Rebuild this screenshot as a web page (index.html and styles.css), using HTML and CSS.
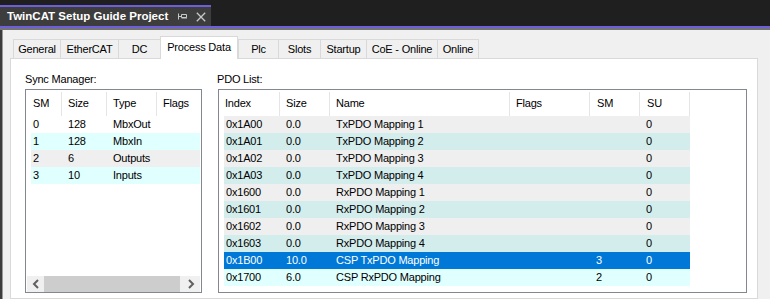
FILE: index.html
```html
<!DOCTYPE html>
<html>
<head>
<meta charset="utf-8">
<link rel="stylesheet" href="styles.css">
</head>
<body>
<div class="top">
  <div class="doctab">
    <span class="doctitle">TwinCAT Setup Guide Project</span>
    <svg class="pin" width="10" height="8" viewBox="0 0 10 8"><path d="M0.5 0.5v6M0.5 3.5h3M3.5 1.5h5v3h-5zM3.5 5h5.5" fill="none" stroke="#c8c8c8" stroke-width="1"/></svg>
    <svg class="close" width="10" height="10" viewBox="0 0 10 10"><path d="M0.8 0.8L9.2 9.2M9.2 0.8L0.8 9.2" stroke="#c8c8c8" stroke-width="1.3"/></svg>
  </div>
</div>
<div class="accent"></div>
<div class="rule"></div>
<div class="main">
  <div class="edge"></div>
  <div class="content">
    <div class="tabs">
      <div class="tab w-general">General</div>
      <div class="tab w-ethercat">EtherCAT</div>
      <div class="tab w-dc">DC</div>
      <div class="tab sel w-pd">Process Data</div>
      <div class="tab w-plc">Plc</div>
      <div class="tab w-slots">Slots</div>
      <div class="tab w-startup">Startup</div>
      <div class="tab w-coe">CoE - Online</div>
      <div class="tab last w-online">Online</div>
    </div>
    <div class="panel">
      <div class="group sync">
        <div class="label">Sync Manager:</div>
        <div class="listbox">
          <div class="hdr">
            <div class="hc s1">SM</div>
            <div class="hc s2">Size</div>
            <div class="hc s3">Type</div>
            <div class="hc s4 nosep">Flags</div>
          </div>
          <div class="row srow white"><div class="c s1">0</div><div class="c s2">128</div><div class="c s3">MbxOut</div><div class="c s4"></div></div>
          <div class="row srow cyan"><div class="c s1">1</div><div class="c s2">128</div><div class="c s3">MbxIn</div><div class="c s4"></div></div>
          <div class="row srow gray"><div class="c s1">2</div><div class="c s2">6</div><div class="c s3">Outputs</div><div class="c s4"></div></div>
          <div class="row srow cyan"><div class="c s1">3</div><div class="c s2">10</div><div class="c s3">Inputs</div><div class="c s4"></div></div>
          <div class="spacer"></div>
          <div class="hscroll">
            <div class="arrow"><svg width="8" height="10" viewBox="0 0 8 10"><path d="M6 1L2 5L6 9" fill="none" stroke="#606060" stroke-width="2"/></svg></div>
            <div class="track"><div class="thumb"></div></div>
            <div class="arrow right"><svg width="8" height="10" viewBox="0 0 8 10"><path d="M2 1L6 5L2 9" fill="none" stroke="#606060" stroke-width="2"/></svg></div>
          </div>
        </div>
      </div>
      <div class="group pdo">
        <div class="label">PDO List:</div>
        <div class="listbox">
          <div class="hdr">
            <div class="hc p1">Index</div>
            <div class="hc p2">Size</div>
            <div class="hc p3">Name</div>
            <div class="hc p4">Flags</div>
            <div class="hc p5">SM</div>
            <div class="hc p6">SU</div>
          </div>
          <div class="row prow gray"><div class="c p1">0x1A00</div><div class="c p2">0.0</div><div class="c p3">TxPDO Mapping 1</div><div class="c p4"></div><div class="c p5"></div><div class="c p6">0</div></div>
          <div class="row prow teal"><div class="c p1">0x1A01</div><div class="c p2">0.0</div><div class="c p3">TxPDO Mapping 2</div><div class="c p4"></div><div class="c p5"></div><div class="c p6">0</div></div>
          <div class="row prow gray"><div class="c p1">0x1A02</div><div class="c p2">0.0</div><div class="c p3">TxPDO Mapping 3</div><div class="c p4"></div><div class="c p5"></div><div class="c p6">0</div></div>
          <div class="row prow teal"><div class="c p1">0x1A03</div><div class="c p2">0.0</div><div class="c p3">TxPDO Mapping 4</div><div class="c p4"></div><div class="c p5"></div><div class="c p6">0</div></div>
          <div class="row prow gray"><div class="c p1">0x1600</div><div class="c p2">0.0</div><div class="c p3">RxPDO Mapping 1</div><div class="c p4"></div><div class="c p5"></div><div class="c p6">0</div></div>
          <div class="row prow teal"><div class="c p1">0x1601</div><div class="c p2">0.0</div><div class="c p3">RxPDO Mapping 2</div><div class="c p4"></div><div class="c p5"></div><div class="c p6">0</div></div>
          <div class="row prow gray"><div class="c p1">0x1602</div><div class="c p2">0.0</div><div class="c p3">RxPDO Mapping 3</div><div class="c p4"></div><div class="c p5"></div><div class="c p6">0</div></div>
          <div class="row prow teal"><div class="c p1">0x1603</div><div class="c p2">0.0</div><div class="c p3">RxPDO Mapping 4</div><div class="c p4"></div><div class="c p5"></div><div class="c p6">0</div></div>
          <div class="row prow selected"><div class="c p1">0x1B00</div><div class="c p2">10.0</div><div class="c p3">CSP TxPDO Mapping</div><div class="c p4"></div><div class="c p5">3</div><div class="c p6">0</div></div>
          <div class="row prow cyan"><div class="c p1">0x1700</div><div class="c p2">6.0</div><div class="c p3">CSP RxPDO Mapping</div><div class="c p4"></div><div class="c p5">2</div><div class="c p6">0</div></div>
        </div>
      </div>
    </div>
  </div>
</div>
</body>
</html>
```
FILE: styles.css
```css
* { box-sizing: border-box; }
html, body { margin: 0; padding: 0; }
body {
  width: 770px;
  height: 299px;
  overflow: hidden;
  background: #f0f0f0;
  font-family: "Liberation Sans", Arial, sans-serif;
  font-size: 11px;
  letter-spacing: -0.2px;
  color: #000;
}
.top {
  height: 26px;
  background: #1f1f1f;
  padding-top: 5px;
}
.doctab {
  width: 211px;
  height: 21px;
  border-top: 2px solid #6c5fd9;
  background: #3d3d3d;
  display: flex;
  align-items: center;
  padding-left: 7px;
}
.doctitle {
  color: #ffffff;
  font-weight: bold;
  font-size: 11.5px;
  letter-spacing: 0;
  line-height: 19px;
  width: 171px;
  white-space: nowrap;
}
.pin { margin-top: 1px; }
.close { margin-left: 8px; }
.accent { height: 2px; background: #6c5fd9; }
.rule { height: 2px; background: #747474; }
.main {
  display: flex;
  height: 269px;
}
.edge {
  width: 3px;
  background: #3c3c3c;
  border-right: 1px solid #9a9a9a;
}
.content {
  flex: 1;
  padding-left: 7px;
  display: flex;
  flex-direction: column;
}
.tabs {
  height: 28px;
  display: flex;
  align-items: flex-end;
  padding-left: 3px;
}
.tab {
  height: 19px;
  line-height: 18px;
  text-align: center;
  background: #f0f0f0;
  border-top: 1px solid #d9d9d9;
  border-left: 1px solid #d9d9d9;
  white-space: nowrap;
}
.tab.last { border-right: 1px solid #d9d9d9; }
.tab.sel {
  height: 23px;
  line-height: 20px;
  background: #fff;
  border-right: 1px solid #d9d9d9;
  margin-bottom: -1px;
  position: relative;
  z-index: 1;
}
.w-general { width: 47px; }
.w-ethercat { width: 58px; }
.w-dc { width: 42px; }
.w-pd { width: 78px; }
.w-plc { width: 40px; }
.w-slots { width: 42px; }
.w-startup { width: 46px; }
.w-coe { width: 71px; }
.w-online { width: 42px; }
.panel {
  width: 748px;
  flex: 1;
  background: #fff;
  border: 1px solid #d9d9d9;
  display: flex;
  padding-top: 12px;
  padding-left: 14px;
}
.group { display: flex; flex-direction: column; }
.sync { width: 177px; }
.pdo { width: 529px; margin-left: 16px; }
.label {
  height: 16px;
  line-height: 16px;
  margin-bottom: 2px;
}
.pdo .label { margin-left: -1px; }
.listbox {
  height: 204px;
  border: 1px solid #828790;
  background: #fff;
  display: flex;
  flex-direction: column;
}
.hdr {
  height: 26px;
  padding-top: 2px;
  display: flex;
}
.hc {
  height: 24px;
  line-height: 23px;
  padding-left: 6px;
  border-right: 1px solid #e5e5e5;
  white-space: nowrap;
}
.hc.nosep { border-right: none; }
.hdr .s1 { width: 36px; padding-left: 7px; }
.hdr .s2 { width: 45px; }
.hdr .s3 { width: 50px; }
.hdr .s4 { flex: 1; }
.hdr .p1 { width: 61px; }
.hdr .p2 { width: 50px; }
.hdr .p3 { width: 180px; }
.hdr .p4 { width: 80px; }
.hdr .p5 { width: 50px; padding-left: 7px; }
.hdr .p6 { width: 50px; padding-left: 7px; }
.row {
  height: 17px;
  line-height: 17px;
  display: flex;
  margin-left: 5px;
  white-space: nowrap;
}
.c { padding-left: 6px; overflow: hidden; }
.srow { width: 169px; }
.srow .s1 { width: 31px; padding-left: 2px; }
.srow .s2 { width: 45px; }
.srow .s3 { width: 50px; }
.srow .s4 { flex: 1; }
.prow { width: 466px; }
.prow .p1 { width: 56px; padding-left: 2px; }
.prow .p2 { width: 50px; }
.prow .p3 { width: 180px; }
.prow .p4 { width: 80px; }
.prow .p5 { width: 50px; }
.prow .p6 { width: 50px; }
.white { background: #fff; }
.cyan { background: #e0ffff; }
.gray { background: #efefef; }
.teal { background: #d3eded; }
.selected { background: #0078d7; color: #fff; }
.spacer { flex: 1; }
.hscroll {
  height: 16px;
  margin: 0 1px 0 1px;
  display: flex;
  background: #f0f0f0;
}
.arrow {
  width: 17px;
  display: flex;
  align-items: center;
  justify-content: center;
}
.arrow.right { width: 19px; }
.track { flex: 1; display: flex; }
.thumb { width: 136px; background: #cdcdcd; }
```
